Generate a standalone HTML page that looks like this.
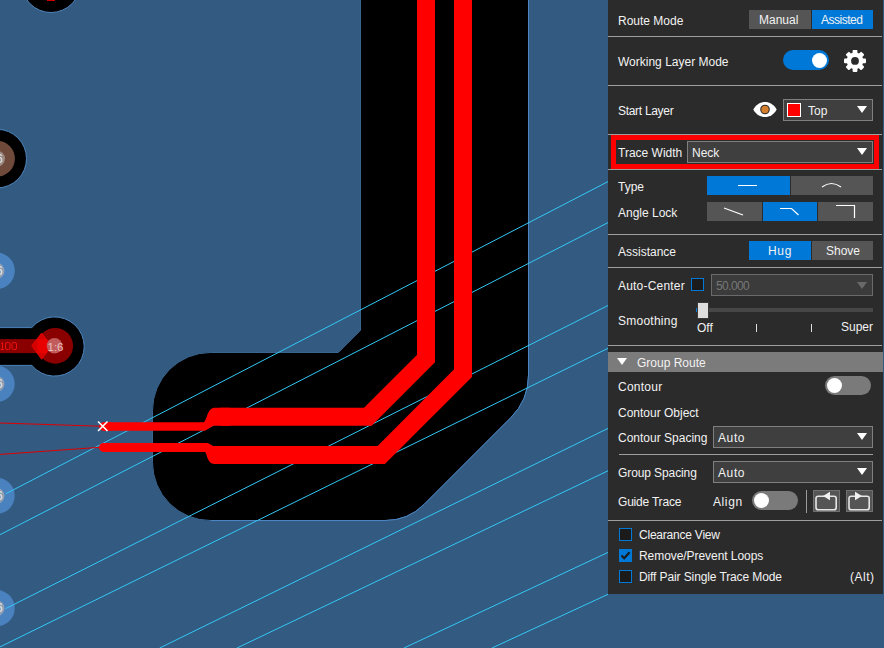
<!DOCTYPE html>
<html><head><meta charset="utf-8"><style>
html,body{margin:0;padding:0}
body{width:884px;height:648px;overflow:hidden;background:#335a80;position:relative;font-family:"Liberation Sans",sans-serif}
.t{position:absolute;font-size:12px;line-height:14px;color:#f2f2f2;white-space:nowrap}
.sep{position:absolute;left:608px;width:274px;height:1px;background:#9e9e9e}
.btn{position:absolute}
.g{background:#555555}
.b{background:#0078d7}
.combo{position:absolute;border:1px solid #7f7f7f;background:#3f3f3f}
.combo.dis{border-color:#6a6a6a;background:#3b3b3b}
.arr{position:absolute;width:0;height:0;border-left:5.7px solid transparent;border-right:5.7px solid transparent;border-top:7.7px solid #fff;margin-left:-0.3px}
.chk{position:absolute;width:11px;height:11px;border:1px solid #0078d7;background:#1b1b1b}
.chk.on{background:#0078d7}
.tog{position:absolute;width:46px;height:19px;border-radius:10px;background:#7a7a7a}
.knob{position:absolute;width:15px;height:15px;border-radius:50%;background:#fff}
</style></head><body>
<svg width="884" height="648" viewBox="0 0 884 648" style="position:absolute;left:0;top:0">
<g stroke="#3a6591" stroke-width="1" fill="#000">
<path d="M360.5,-5 L360.5,330.3 L338.3,352.5 L210.5,352.5 A58,58 0 0 0 152.5,410.5 L152.5,462.5 A58,58 0 0 0 210.5,520.5 L385.2,520.5 A55,55 0 0 0 424.1,504.4 L510.93,417.57 A60,60 0 0 0 528.5,375.15 L528.5,-5 Z"/>
</g><path d="M528.5,-5 L528.5,375.15 A60,60 0 0 1 510.93,417.57 L424.1,504.4 A55,55 0 0 1 385.2,520.5 L210.5,520.5" stroke="#4a86c4" stroke-width="1" fill="none"/>
<g stroke="#4d84bb" stroke-width="1" fill="#000"><circle cx="51" cy="-17" r="29.5"/>
<circle cx="-2.8" cy="158.6" r="29.3"/>
<path d="M-5,327.6 L31.8,327.6 A29.6,29.6 0 1 1 31.8,365.4 L-5,365.4 Z"/>
</g>
<rect x="47" y="0" width="8" height="1" fill="#c00"/>
<circle cx="-3" cy="158.6" r="17.9" fill="#6f4a3b"/>
<circle cx="-3" cy="158.6" r="8" fill="#9a8a86"/>
<g fill="#4a82bf">
<circle cx="-3.5" cy="270.8" r="18.3"/>
<circle cx="-3.5" cy="383.9" r="18.2"/>
<circle cx="-3.5" cy="495.8" r="18.2"/>
<circle cx="-3.5" cy="608.2" r="18.2"/>
</g>
<g fill="#8e9fb4">
<circle cx="-3.5" cy="270.8" r="8"/>
<circle cx="-3.5" cy="383.9" r="8"/>
<circle cx="-3.5" cy="495.8" r="8"/>
<circle cx="-3.5" cy="608.2" r="8"/>
</g>
<!-- red pad -->
<rect x="-5" y="339.1" width="45" height="14" fill="#8a0000"/>
<circle cx="55.2" cy="345.8" r="17.9" fill="#8a0000"/>
<path d="M41.6,333.1 L51.5,345.8 L41.6,359.3 L31.7,345.8 Z" fill="#d40000" stroke="#f00000" stroke-width="0.8"/>
<rect x="37.3" y="339.1" width="10" height="14" fill="#e80000"/>
<circle cx="54.5" cy="345.8" r="7.8" fill="#c25b5b"/>
<g font-family="Liberation Sans" font-size="12" fill="#e5e5e5">
<text x="-4" y="275">6</text><text x="-4" y="388">6</text><text x="-4" y="500">6</text><text x="-4" y="612">6</text><text x="-4" y="163">6</text>
<text x="47.5" y="351" font-size="11.5" fill="#e8c0c0">1:6</text>
</g>
<g stroke="#f01010" stroke-width="1" fill="none"><path d="M2.5,342.5 L2.5,349.5 M0.5,349.5 L4,349.5 M1.2,343.8 L2.5,342.5"/><rect x="5.5" y="342.5" width="4.5" height="7" rx="1.5"/><rect x="12" y="342.5" width="4.5" height="7" rx="1.5"/></g>
<!-- cyan lines -->
<g stroke="#33c8f5" stroke-width="1" fill="none">
<line x1="5.7" y1="493.8" x2="608" y2="181.6"/>
<line x1="0" y1="534.7" x2="608" y2="222.6"/>
<line x1="5.7" y1="608.6" x2="608" y2="305.5"/>
<line x1="0" y1="646.9" x2="608" y2="348.3"/>
<line x1="159.7" y1="648" x2="608" y2="428.4"/>
<line x1="237" y1="648" x2="608" y2="470.8"/>
<line x1="404" y1="648" x2="608" y2="552.4"/>
<line x1="492" y1="648" x2="608" y2="594.3"/>
</g>
<!-- ratsnest red -->
<g stroke="#e00000" stroke-width="1" fill="none">
<line x1="0" y1="423" x2="100" y2="426.2"/>
<line x1="0" y1="454.4" x2="100" y2="447.3"/>
</g>
<!-- traces -->
<g stroke="#ff0000" fill="none" stroke-linejoin="miter">
<polyline stroke-width="18" points="426,-5 426,358.6 367.9,416.7 220,416.7"/>
<polyline stroke-width="18" points="463,-5 463,373.2 381.2,455 220,455"/>
<line stroke-width="8.6" stroke-linecap="round" x1="103.5" y1="426.5" x2="110" y2="426.5"/>
<line stroke-width="8.9" stroke-linecap="round" x1="103.5" y1="447.45" x2="110" y2="447.45"/>
</g>
<g fill="#ff0000">
<path d="M103.5,422.2 L203.5,422.2 C206.8,421.6 207,408.1 214.3,407.7 L230,407.7 L230,425.7 L213.2,425.7 L205.1,430.8 L103.5,430.8 Z"/>
<path d="M103.5,443 L207.8,443 L213.2,446 L230,446 L230,464 L214.3,464 C207,463.6 206.8,452.5 205.1,451.9 L103.5,451.9 Z"/>
</g>
<g stroke="#ffffff" stroke-width="1.6">
<line x1="98" y1="421.5" x2="107.5" y2="431"/>
<line x1="107.5" y1="421.5" x2="98" y2="431"/>
</g>
</svg>
<div id="panel" style="position:absolute;left:608px;top:0;width:275px;height:594px;background:#2b2b2b"></div>
<!-- separators -->
<div class="sep" style="top:36px"></div>
<div class="sep" style="top:85px"></div>
<div class="sep" style="top:134px"></div>
<div class="sep" style="top:169px"></div>
<div class="sep" style="top:234px"></div>
<div class="sep" style="top:267px"></div>
<div class="sep" style="top:345px"></div>
<div class="sep" style="top:454px;left:619px;width:254px"></div>
<div class="sep" style="top:520px"></div>

<!-- Route mode -->
<div class="t" style="left:618px;top:14px">Route Mode</div>
<div class="btn g" style="left:749px;top:10px;width:62px;height:19px"></div>
<div class="btn b" style="left:812px;top:10px;width:61px;height:19px"></div>
<div class="t" style="left:759px;top:13px">Manual</div>
<div class="t" style="letter-spacing:-0.5px;left:821px;top:13px">Assisted</div>

<!-- Working layer mode -->
<div class="t" style="left:618px;top:55px">Working Layer Mode</div>
<div style="position:absolute;left:783px;top:50px;width:46px;height:20px;border-radius:10px;background:#0078d7"></div>
<div style="position:absolute;left:812px;top:53px;width:15px;height:15px;border-radius:50%;background:#fff"></div>
<svg style="position:absolute;left:844px;top:50px" width="22" height="22" viewBox="0 0 22 22">
<g fill="#fff" transform="translate(11,10.9)">
<circle r="8.3"/>
<rect x="-2.4" y="-11" width="4.8" height="22" rx="1"/>
<rect x="-2.4" y="-11" width="4.8" height="22" rx="1" transform="rotate(45)"/>
<rect x="-2.4" y="-11" width="4.8" height="22" rx="1" transform="rotate(90)"/>
<rect x="-2.4" y="-11" width="4.8" height="22" rx="1" transform="rotate(135)"/>
<circle r="3.9" fill="#2b2b2b"/>
</g>
</svg>

<!-- Start layer -->
<div class="t" style="letter-spacing:-0.3px;left:618px;top:104px">Start Layer</div>
<svg style="position:absolute;left:753px;top:101px" width="24" height="17" viewBox="0 0 24 17">
<path fill="#fff" d="M0.3,8.5 C5.5,-1.6 18.5,-1.6 23.7,8.5 C18.5,18.6 5.5,18.6 0.3,8.5 Z"/>
<circle cx="12" cy="8.5" r="4.8" fill="#2b2b2b"/>
<circle cx="12" cy="8.5" r="3.7" fill="#d57f2c"/>
</svg>
<div class="combo" style="left:783px;top:99px;width:88px;height:20px"></div>
<div style="position:absolute;left:787px;top:103px;width:12px;height:12px;border:1px solid #fff;background:#f00"></div>
<div class="t" style="left:808px;top:104px">Top</div>
<div class="arr" style="left:857px;top:106px"></div>

<!-- Trace width -->
<div style="position:absolute;left:611px;top:135px;width:258px;height:24px;border:5px solid #f00"></div>
<div class="t" style="left:618px;top:146px">Trace Width</div>
<div class="combo" style="left:687px;top:141px;width:184px;height:20px"></div>
<div class="t" style="left:692px;top:146px">Neck</div>
<div class="arr" style="left:857px;top:148px"></div>

<!-- Type -->
<div class="t" style="left:618px;top:180px">Type</div>
<div class="btn b" style="left:707px;top:176px;width:83px;height:19px"></div>
<div class="btn g" style="left:791px;top:176px;width:82px;height:19px"></div>
<div style="position:absolute;left:738px;top:185px;width:19px;height:1px;background:#fff"></div>
<svg style="position:absolute;left:820px;top:180px" width="24" height="10"><path d="M2,7 Q11.5,0 21,7" stroke="#fff" stroke-width="1.2" fill="none"/></svg>

<!-- Angle Lock -->
<div class="t" style="left:618px;top:206px">Angle Lock</div>
<div class="btn g" style="left:707px;top:202px;width:55px;height:19px"></div>
<div class="btn b" style="left:763px;top:202px;width:54px;height:19px"></div>
<div class="btn g" style="left:818px;top:202px;width:55px;height:19px"></div>
<svg style="position:absolute;left:700px;top:195px" width="180" height="30" viewBox="700 195 180 30">
<g stroke="#fff" stroke-width="1.2" fill="none">
<line x1="724" y1="208" x2="743" y2="215"/>
<polyline points="780,208.5 791.5,208.5 798.5,215"/>
<polyline points="836,205.5 854.5,205.5 854.5,218"/>
</g>
</svg>

<!-- Assistance -->
<div class="t" style="left:618px;top:245px">Assistance</div>
<div class="btn b" style="left:749px;top:241px;width:62px;height:19px"></div>
<div class="btn g" style="left:812px;top:241px;width:61px;height:19px"></div>
<div class="t" style="letter-spacing:0.7px;left:768px;top:244px">Hug</div>
<div class="t" style="left:826px;top:244px">Shove</div>

<!-- Auto-center -->
<div class="t" style="letter-spacing:0.2px;left:618px;top:279px">Auto-Center</div>
<div class="chk" style="left:691px;top:278px"></div>
<div class="combo dis" style="left:711px;top:274px;width:160px;height:20px"></div>
<div class="t" style="left:716px;top:279px;color:#777;letter-spacing:-0.6px">50.000</div>
<div class="arr" style="left:857px;top:282px;border-top-color:#696969"></div>

<!-- Smoothing -->
<div class="t" style="letter-spacing:0.25px;left:618px;top:314px">Smoothing</div>
<div style="position:absolute;left:696px;top:308px;width:177px;height:4px;background:#474747"></div>
<div style="position:absolute;left:696px;top:308px;width:3px;height:4px;background:#0078d7"></div>
<div style="position:absolute;left:697px;top:302px;width:10px;height:15px;border:1px solid #3a3a3a;background:#dedede"></div>
<div class="t" style="left:697px;top:321px">Off</div>
<div class="t" style="left:841px;top:320px">Super</div>
<div style="position:absolute;left:756px;top:324px;width:1px;height:8px;background:#ddd"></div>
<div style="position:absolute;left:811px;top:324px;width:1px;height:8px;background:#ddd"></div>

<!-- Group route header -->
<div style="position:absolute;left:608px;top:352px;width:275px;height:20px;background:#7b7b7b"></div>
<div style="position:absolute;left:617.3px;top:358px;width:0;height:0;border-left:5.75px solid transparent;border-right:5.75px solid transparent;border-top:7.8px solid #fff"></div>
<div class="t" style="left:637px;top:356px">Group Route</div>

<!-- Contour -->
<div class="t" style="letter-spacing:0.25px;left:618px;top:380px">Contour</div>
<div class="tog" style="left:825px;top:376px"></div>
<div class="knob" style="left:827px;top:378px"></div>
<div class="t" style="left:618px;top:406px">Contour Object</div>
<div class="t" style="left:618px;top:431px">Contour Spacing</div>
<div class="combo" style="left:713px;top:426px;width:158px;height:20px"></div>
<div class="t" style="letter-spacing:0.6px;left:718px;top:431px">Auto</div>
<div class="arr" style="left:857px;top:433px"></div>

<div class="t" style="letter-spacing:-0.1px;left:618px;top:466px">Group Spacing</div>
<div class="combo" style="left:713px;top:461px;width:158px;height:20px"></div>
<div class="t" style="letter-spacing:0.6px;left:718px;top:466px">Auto</div>
<div class="arr" style="left:857px;top:468px"></div>

<div class="t" style="letter-spacing:-0.2px;left:618px;top:495px">Guide Trace</div>
<div class="t" style="letter-spacing:0.6px;left:713px;top:495px">Align</div>
<div class="tog" style="left:752px;top:491px"></div>
<div class="knob" style="left:754px;top:493px"></div>
<div style="position:absolute;left:806px;top:490px;width:1px;height:23px;background:#9a9a9a"></div>
<svg style="position:absolute;left:813px;top:490px" width="60" height="22" viewBox="813 490 60 22">
<rect x="813.5" y="490.5" width="26" height="21" fill="#555" stroke="#707070"/>
<rect x="846.5" y="490.5" width="26" height="21" fill="#555" stroke="#707070"/>
<g stroke="#e6e6e6" stroke-width="1.6" fill="none">
<rect x="816" y="496.2" width="20.2" height="13.6" rx="2.2"/>
<rect x="849" y="496.2" width="20.2" height="13.6" rx="2.2"/>
</g>
<path d="M823,496 L830,491.7 L830,500.3 Z" fill="#f0f0f0"/>
<path d="M862,496 L855,491.7 L855,500.3 Z" fill="#f0f0f0"/>
</svg>

<!-- checkboxes -->
<div class="chk" style="left:619px;top:528px"></div>
<div class="t" style="letter-spacing:-0.22px;left:639px;top:528px">Clearance View</div>
<div class="chk on" style="left:619px;top:549px"><svg width="11" height="11" style="position:absolute;left:0;top:0"><path d="M1.5,5.5 L4.2,8.3 L9.6,2.2" stroke="#1a1a1a" stroke-width="2.1" fill="none"/></svg></div>
<div class="t" style="letter-spacing:-0.06px;left:639px;top:549px">Remove/Prevent Loops</div>
<div class="chk" style="left:619px;top:570px"></div>
<div class="t" style="letter-spacing:-0.11px;left:639px;top:570px">Diff Pair Single Trace Mode</div>
<div class="t" style="letter-spacing:0.5px;left:850px;top:570px">(Alt)</div>
</body></html>
